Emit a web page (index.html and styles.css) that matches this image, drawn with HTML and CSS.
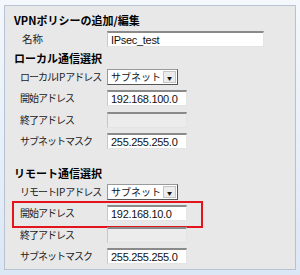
FILE: index.html
```html
<!DOCTYPE html>
<html lang="ja">
<head>
    <meta charset="UTF-8">
    <title>VPNポリシーの追加/編集</title>
    <link rel="stylesheet" href="styles.css">
</head>
<body>
    <div class="frame">
        <div class="panel">
            <h2 class="title">VPNポリシーの追加/編集</h2>
            <div class="row">
                <span class="label name">名称</span>
                <input class="field wide" type="text" value="IPsec_test">
            </div>

            <h3 class="section">ローカル通信選択</h3>
            <div class="row">
                <span class="label">ローカル<span class="latin">IP</span>アドレス</span>
                <div class="select"><span>サブネット</span><span class="arrow">▼</span></div>
            </div>
            <div class="row">
                <span class="label">開始アドレス</span>
                <input class="field" type="text" value="192.168.100.0">
            </div>
            <div class="row">
                <span class="label">終了アドレス</span>
                <input class="field" type="text" value="" disabled>
            </div>
            <div class="row">
                <span class="label">サブネットマスク</span>
                <input class="field" type="text" value="255.255.255.0">
            </div>

            <h3 class="section remote">リモート通信選択</h3>
            <div class="row">
                <span class="label">リモート<span class="latin">IP</span>アドレス</span>
                <div class="select"><span>サブネット</span><span class="arrow">▼</span></div>
            </div>
            <div class="row marked">
                <span class="label">開始アドレス</span>
                <input class="field" type="text" value="192.168.10.0">
            </div>
            <div class="row">
                <span class="label">終了アドレス</span>
                <input class="field" type="text" value="" disabled>
            </div>
            <div class="row">
                <span class="label">サブネットマスク</span>
                <input class="field" type="text" value="255.255.255.0">
            </div>
        </div>
    </div>
</body>
</html>
```

FILE: styles.css
```css
body {
    margin: 0;
    padding: 0;
    background: #dce7f5;
    font-family: "Noto Sans CJK JP", "Liberation Sans", sans-serif;
    color: #222;
}
.frame {
    width: 300px;
    height: 275px;
    padding: 5px 4px 5px 4px;
    box-sizing: border-box;
    background: linear-gradient(#f4f8fd, #dce7f5);
}
.panel {
    height: 100%;
    box-sizing: border-box;
    background: #e8e8e8;
    border: 1px solid #b7c3d3;
    padding: 6px 0 0 9px;
}
.title, .section {
    margin: 0;
    font-size: 11px;
    font-weight: bold;
    color: #000;
    line-height: 16px;
}
.section.remote {
    margin-top: 13px;
}
.row {
    display: flex;
    align-items: center;
    height: 21.5px;
    padding-left: 6px;
    width: 184px;
    position: relative;
}
.row:first-of-type {
    height: 22px;
}
.row.marked::after {
    content: "";
    position: absolute;
    top: -1.5px;
    bottom: -4px;
    left: -2px;
    right: 1px;
    border: 2px solid #e3141c;
}
.label {
    width: 87px;
    flex: none;
    font-size: 10px;
    letter-spacing: -1px;
    line-height: 14px;
    white-space: nowrap;
    color: #222;
}
.latin {
    letter-spacing: 0;
}
.label.name {
    padding-left: 2px;
    width: 85px;
    font-size: 10.5px;
    letter-spacing: 0;
}
.field {
    width: 80px;
    height: 16px;
    box-sizing: border-box;
    padding: 0 3px;
    margin: 0;
    border: 1px solid #e4e4e4;
    border-top: 2px solid #8a8a8a;
    border-left-color: #c8c8c8;
    background: #fff;
    font-family: "Liberation Sans", sans-serif;
    font-size: 11px;
    letter-spacing: -0.3px;
    color: #111;
}
.field.wide {
    width: 157px;
    flex: none;
}
.field:disabled {
    background: #ececec;
}
.select {
    width: 71px;
    height: 16px;
    flex: none;
    box-sizing: border-box;
    display: flex;
    align-items: center;
    justify-content: space-between;
    padding-left: 3px;
    border: 1px solid #9a9a9a;
    border-right-color: #555;
    border-bottom-color: #555;
    background: #fff;
    font-size: 10px;
    line-height: 14px;
    color: #111;
}
.arrow {
    width: 13px;
    height: 12px;
    margin-right: 1px;
    background: #ececec;
    border: 1px solid #c4c4c4;
    box-sizing: border-box;
    font-size: 5px;
    line-height: 11px;
    text-align: center;
    color: #111;
}
```
